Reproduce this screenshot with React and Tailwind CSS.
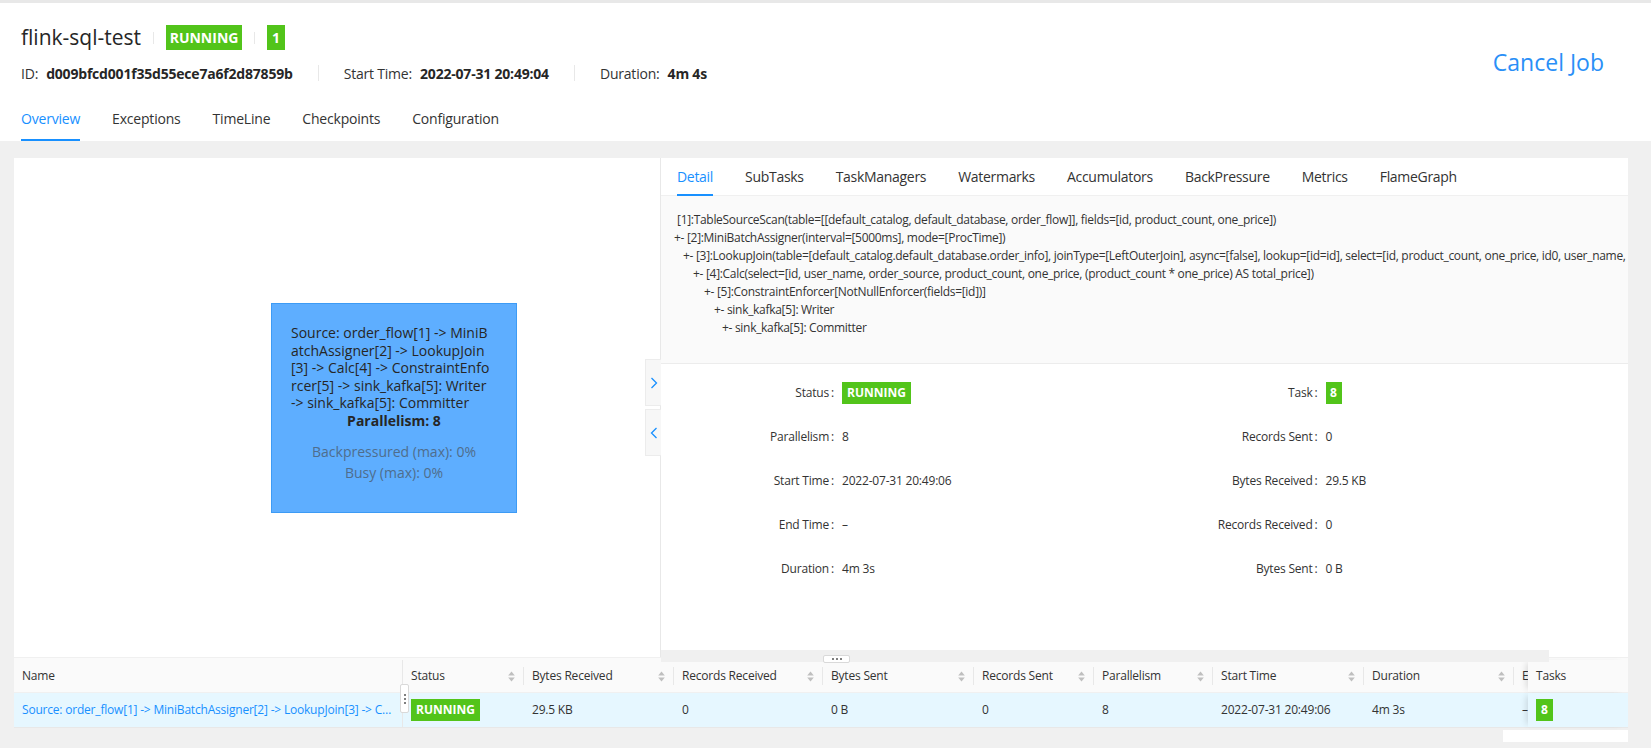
import React from "react";

function Badge({ children, className = "" }) {
  return (
    <span className={`inline-flex items-center justify-center bg-[#52c41a] text-white font-bold tracking-normal ${className}`}>
      {children}
    </span>
  );
}

function SortIcon() {
  return (
    <svg width="7" height="11" viewBox="0 0 7 11" className="shrink-0 mr-[8px]">
      <path d="M3.5 0.5 L6.8 4.6 H0.2 Z" fill="#bfbfbf" />
      <path d="M3.5 10.5 L6.8 6.4 H0.2 Z" fill="#bfbfbf" />
    </svg>
  );
}

function Chevron({ dir }) {
  return (
    <svg width="8" height="12" viewBox="0 0 8 12">
      {dir === "right" ? (
        <polyline points="1.5,1 6.5,6 1.5,11" fill="none" stroke="#1890ff" strokeWidth="1.3" />
      ) : (
        <polyline points="6.5,1 1.5,6 6.5,11" fill="none" stroke="#1890ff" strokeWidth="1.3" />
      )}
    </svg>
  );
}

const cols = [
  { label: "Bytes Received", w: "w-[150px]", v: "29.5 KB" },
  { label: "Records Received", w: "w-[149px]", v: "0" },
  { label: "Bytes Sent", w: "w-[151px]", v: "0 B" },
  { label: "Records Sent", w: "w-[120px]", v: "0" },
  { label: "Parallelism", w: "w-[119px]", v: "8" },
  { label: "Start Time", w: "w-[151px]", v: "2022-07-31 20:49:06" },
  { label: "Duration", w: "w-[150px]", v: "4m 3s" },
];

const detailLines = [
  { c: "pl-[16px]", t: "[1]:TableSourceScan(table=[[default_catalog, default_database, order_flow]], fields=[id, product_count, one_price])" },
  { c: "pl-[13px]", t: "+- [2]:MiniBatchAssigner(interval=[5000ms], mode=[ProcTime])" },
  { c: "pl-[22px]", t: "+- [3]:LookupJoin(table=[default_catalog.default_database.order_info], joinType=[LeftOuterJoin], async=[false], lookup=[id=id], select=[id, product_count, one_price, id0, user_name, order_source])" },
  { c: "pl-[32px]", t: "+- [4]:Calc(select=[id, user_name, order_source, product_count, one_price, (product_count * one_price) AS total_price])" },
  { c: "pl-[43px]", t: "+- [5]:ConstraintEnforcer[NotNullEnforcer(fields=[id])]" },
  { c: "pl-[53px]", t: "+- sink_kafka[5]: Writer" },
  { c: "pl-[61px]", t: "+- sink_kafka[5]: Committer" },
];

function DescItem({ label, children }) {
  return (
    <div className="flex items-center h-[44px] text-[12px] tracking-[-0.2px]">
      <span className="w-[173px] shrink-0 text-right text-[#333]">
        {label}
        <span className="ml-[2px]">:</span>
      </span>
      <span className="ml-[8px] text-[#333] flex items-center">{children}</span>
    </div>
  );
}

export default function App() {
  return (
    <div className="w-[1651px] h-[748px] overflow-hidden bg-[#f0f0f0] font-['Open_Sans',sans-serif] text-[#333]">
      <div className="h-[3px] bg-[#e8e8e8]" />
      {/* Header */}
      <header className="bg-white h-[138px] pl-[21px] pr-[47px] flex flex-col">
        <div className="flex justify-between items-start">
          <div className="flex flex-col">
            <div className="flex items-center h-[25px] mt-[22px]">
              <span className="text-[21px] leading-[25px] text-[#262626]">flink-sql-test</span>
              <span className="mx-[12px] w-px h-[12px] bg-[#e8e8e8]" />
              <Badge className="h-[25px] w-[76px] text-[14px]">RUNNING</Badge>
              <span className="mx-[12px] w-px h-[12px] bg-[#e8e8e8]" />
              <Badge className="h-[25px] w-[18px] text-[14px]">1</Badge>
            </div>
            <div className="flex items-center h-[20px] mt-[13px] text-[14px] text-[#333] tracking-[-0.2px]">
              <span>ID:</span>
              <span className="ml-[8px] font-bold text-[#262626]">d009bfcd001f35d55ece7a6f2d87859b</span>
              <span className="mx-[25px] w-px h-[16px] bg-[#e8e8e8]" />
              <span>Start Time:</span>
              <span className="ml-[8px] font-bold text-[#262626]">2022-07-31 20:49:04</span>
              <span className="mx-[25px] w-px h-[16px] bg-[#e8e8e8]" />
              <span>Duration:</span>
              <span className="ml-[8px] font-bold text-[#262626]">4m 4s</span>
            </div>
          </div>
          <span className="mt-[44px] text-[23px] leading-[30px] text-[#2a8ff7]">Cancel Job</span>
        </div>
        <nav className="mt-auto flex gap-[32px] text-[14px] tracking-[-0.2px]">
          {["Overview", "Exceptions", "TimeLine", "Checkpoints", "Configuration"].map((t, i) => (
            <div key={t} className={`relative h-[46px] flex items-center ${i === 0 ? "text-[#1890ff]" : "text-[#333]"}`}>
              {t}
              {i === 0 && <span className="absolute left-0 right-0 bottom-0 h-[2px] bg-[#1890ff]" />}
            </div>
          ))}
        </nav>
      </header>

      {/* Card */}
      <div className="relative mt-[17px] ml-[14px] w-[1614px]">
        <div className="flex h-[499px] bg-white">
          {/* Graph pane */}
          <div className="relative w-[647px] shrink-0 border-r border-[#e8e8e8]">
            <div className="absolute left-[257px] top-[145px] w-[246px] h-[210px] bg-[#5eaeff] border border-[#3d9bf5] px-[19px] pt-[20px] text-[14px] leading-[17.5px] text-[#262626]">
              <div>Source: order_flow[1] -&gt; MiniB</div>
              <div>atchAssigner[2] -&gt; LookupJoin</div>
              <div>[3] -&gt; Calc[4] -&gt; ConstraintEnfo</div>
              <div>rcer[5] -&gt; sink_kafka[5]: Writer</div>
              <div>-&gt; sink_kafka[5]: Committer</div>
              <div className="text-center font-bold leading-[18px]">Parallelism: 8</div>
              <div className="text-center mt-[11px] leading-[21px] text-[#4f6d8c]">Backpressured (max): 0%</div>
              <div className="text-center leading-[21px] text-[#4f6d8c]">Busy (max): 0%</div>
            </div>
            <div className="absolute left-[631px] top-[201px] w-[16px] h-[47px] bg-[#f7f7f7] border border-r-0 border-[#ececec] flex items-center justify-center">
              <Chevron dir="right" />
            </div>
            <div className="absolute left-[631px] top-[251px] w-[16px] h-[47px] bg-[#f7f7f7] border border-r-0 border-[#ececec] flex items-center justify-center">
              <Chevron dir="left" />
            </div>
          </div>
          {/* Right pane */}
          <div className="flex-1 min-w-0 flex flex-col overflow-hidden">
            <div className="h-[38px] shrink-0 flex gap-[32px] pl-[16px] border-b border-[#f0f0f0] text-[14px] tracking-[-0.3px]">
              {["Detail", "SubTasks", "TaskManagers", "Watermarks", "Accumulators", "BackPressure", "Metrics", "FlameGraph"].map((t, i) => (
                <div key={t} className={`relative h-full flex items-center ${i === 0 ? "text-[#1890ff]" : "text-[#333]"}`}>
                  {t}
                  {i === 0 && <span className="absolute left-0 right-0 bottom-[-1px] h-[2px] bg-[#1890ff]" />}
                </div>
              ))}
            </div>
            <div className="h-[168px] shrink-0 bg-[#fafafa] border-b border-[#ececec] pt-[15px] text-[12px] leading-[18px] tracking-[-0.3px] text-[#333] whitespace-nowrap overflow-hidden">
              {detailLines.map((l, i) => (
                <div key={i} className={l.c}>{l.t}</div>
              ))}
            </div>
            <div className="grid grid-cols-2 pt-[7px]">
              <DescItem label="Status">
                <Badge className="h-[22px] px-[5px] text-[12px]">RUNNING</Badge>
              </DescItem>
              <DescItem label="Task">
                <Badge className="h-[22px] w-[16px] text-[12px]">8</Badge>
              </DescItem>
              <DescItem label="Parallelism">8</DescItem>
              <DescItem label="Records Sent">0</DescItem>
              <DescItem label="Start Time">2022-07-31 20:49:06</DescItem>
              <DescItem label="Bytes Received">29.5 KB</DescItem>
              <DescItem label="End Time">–</DescItem>
              <DescItem label="Records Received">0</DescItem>
              <DescItem label="Duration">4m 3s</DescItem>
              <DescItem label="Bytes Sent">0 B</DescItem>
            </div>
          </div>
        </div>

        {/* Table */}
        <div className="relative text-[12px] text-[#333] tracking-[-0.2px]">
          <div className="flex h-[36px] bg-[#fafafa] border-t border-b border-[#f0f0f0] pt-[2px]">
            <div className="w-[389px] shrink-0 flex items-center pl-[8px] border-r border-[#e8e8e8]">Name</div>
            <div className="w-[121px] shrink-0 flex items-center pl-[8px]">
              <span className="flex-1">Status</span>
              <SortIcon />
              <span className="w-px h-[18px] bg-[#e8e8e8]" />
            </div>
            {cols.map((c) => (
              <div key={c.label} className={`${c.w} shrink-0 flex items-center pl-[8px]`}>
                <span className="flex-1 whitespace-nowrap">{c.label}</span>
                <SortIcon />
                <span className="w-px h-[18px] bg-[#e8e8e8]" />
              </div>
            ))}
            <div className="w-[14px] shrink-0 flex items-center pl-[8px] overflow-hidden whitespace-nowrap">End Time</div>
            <div className="w-[100px] shrink-0 flex items-center pl-[8px] bg-[#fafafa] shadow-[-5px_0_6px_-3px_rgba(0,0,0,0.12)]">Tasks</div>
          </div>
          <div className="flex h-[35px] bg-[#e6f7ff] border-b border-[#e8e8e8]">
            <div className="w-[389px] shrink-0 flex items-center pl-[8px] pr-[10px] border-r border-[#e8e8e8] text-[#1890ff] min-w-0">
              <span className="truncate">Source: order_flow[1] -&gt; MiniBatchAssigner[2] -&gt; LookupJoin[3] -&gt; Calc[4] -&gt; ConstraintEnforcer[5] -&gt; sink_kafka[5]: Writer -&gt; sink_kafka[5]: Committer</span>
            </div>
            <div className="w-[121px] shrink-0 flex items-center pl-[8px]">
              <Badge className="h-[22px] px-[5px] text-[12px]">RUNNING</Badge>
            </div>
            {cols.map((c) => (
              <div key={c.label} className={`${c.w} shrink-0 flex items-center pl-[8px] whitespace-nowrap`}>{c.v}</div>
            ))}
            <div className="w-[14px] shrink-0 flex items-center pl-[8px] overflow-hidden">–</div>
            <div className="w-[100px] shrink-0 flex items-center pl-[8px] bg-[#e6f7ff] shadow-[-5px_0_6px_-3px_rgba(0,0,0,0.12)]">
              <Badge className="h-[22px] w-[17px] text-[12px]">8</Badge>
            </div>
          </div>
          {/* column resize handle */}
          <div className="absolute left-[386px] top-[27px] w-[9px] h-[29px] bg-white border border-[#d9d9d9] rounded-[2px] flex flex-col items-center justify-center gap-[2px]">
            <span className="w-[2px] h-[2px] bg-[#555] rounded-full" />
            <span className="w-[2px] h-[2px] bg-[#555] rounded-full" />
            <span className="w-[2px] h-[2px] bg-[#555] rounded-full" />
          </div>
        </div>
        <div className="flex justify-end mt-[2px]">
          <div className="w-[125px] h-[12px] bg-white" />
        </div>

        {/* split resize band */}
        <div className="absolute left-[647px] top-[492px] w-[888px] h-[12px] bg-[#f0f0f0]">
          <div className="absolute left-[162px] top-[5px] w-[27px] h-[8px] bg-white border border-[#d9d9d9] rounded-[2px] flex items-center justify-center gap-[2px]">
            <span className="w-[2px] h-[2px] bg-[#555] rounded-full" />
            <span className="w-[2px] h-[2px] bg-[#555] rounded-full" />
            <span className="w-[2px] h-[2px] bg-[#555] rounded-full" />
          </div>
        </div>
      </div>
    </div>
  );
}
